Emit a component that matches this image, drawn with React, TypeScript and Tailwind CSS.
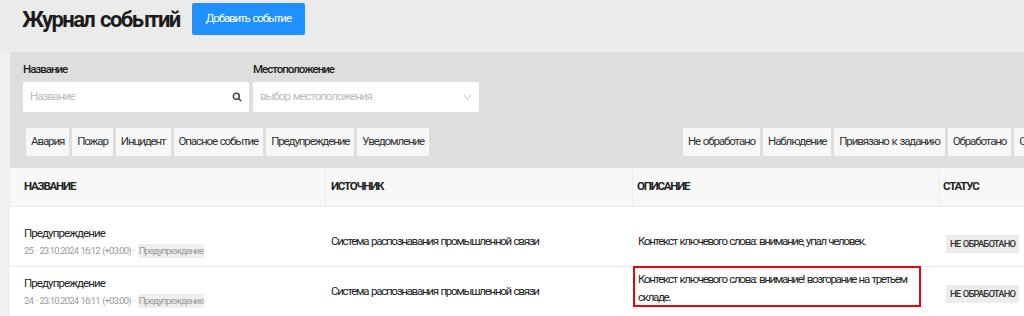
import React from "react";

const leftChips = ["Авария", "Пожар", "Инцидент", "Опасное событие", "Предупреждение", "Уведомление"];
const rightChips = ["Не обработано", "Наблюдение", "Привязано к заданию", "Обработано", "Сохранено"];

function Chip({ label }: { label: string }) {
  return (
    <div className="h-[28px] px-[5px] flex items-center bg-[#f7f7f7] text-[11.5px] text-[#333] tracking-[-1.1px] [word-spacing:1px] whitespace-nowrap shrink-0">
      {label}
    </div>
  );
}

function Row({ n, time, desc, boxed }: { n: number; time: string; desc: string; boxed?: boolean }) {
  return (
    <div className="grid grid-cols-[316px_307px_307px_1fr] h-[50px] border-b border-[#ececec] items-center">
      <div className="pl-[14px]">
        <div className="text-[11.5px] text-[#222] tracking-[-0.9px] leading-[16px]">Предупреждение</div>
        <div className="text-[9.5px] text-[#9a9a9a] tracking-[-0.9px] [word-spacing:1px] leading-[14px] mt-[3px] flex items-center whitespace-nowrap">
          <span>{n} · 23.10.2024 {time} (+03:00) ·</span>
          <span className="ml-[3px] bg-[#eeeeee] px-[1px]">Предупреждение</span>
        </div>
      </div>
      <div className="pl-[5px] text-[11.5px] text-[#222] tracking-[-1.25px] [word-spacing:1px] whitespace-nowrap">
        Система распознавания промышленной связи
      </div>
      <div className={boxed ? "self-start mt-[-1px]" : ""}>
        <div
          className={
            boxed
              ? "w-[288px] h-[41px] border-2 border-[#e4060f] px-[3px] pt-[2px] text-[11.5px] text-[#222] tracking-[-1.3px] [word-spacing:1px] leading-[18px]"
              : "pl-[5px] text-[11.5px] text-[#222] tracking-[-1.3px] [word-spacing:1px] whitespace-nowrap"
          }
        >
          {desc}
        </div>
      </div>
      <div className="pl-[6px]">
        <span className="inline-flex items-center h-[18px] px-[4px] bg-[#ececec] text-[9.5px] font-medium text-[#333] tracking-[-0.9px] [word-spacing:1px] whitespace-nowrap">
          НЕ ОБРАБОТАНО
        </span>
      </div>
    </div>
  );
}

export default function App() {
  return (
    <div
      className="w-[1024px] h-[316px] overflow-hidden bg-[#f0f0f0] flex"
      style={{ fontFamily: "Roboto, 'Noto Sans', sans-serif" }}
    >
      <div className="w-[10px] shrink-0 bg-[#f0f0f0]" />
      <div className="flex-1 flex flex-col min-w-0">
        <div className="h-[52px] shrink-0 bg-[#ebebeb] flex items-start pl-[22px] pt-[3px] ml-[-10px]">
          <h1 className="text-[22px] font-bold text-[#1c1c1c] tracking-[-1.6px] [word-spacing:2px] leading-[32px] mt-[1px] whitespace-nowrap">
            Журнал событий
          </h1>
          <button className="ml-[12px] h-[32px] px-[14px] bg-[#1e90ff] rounded-[2px] text-white text-[11.5px] tracking-[-1.1px] [word-spacing:1px] whitespace-nowrap">
            Добавить событие
          </button>
        </div>
        <div className="h-[116px] shrink-0 bg-[#dedede] pl-[13px] pt-[9px] flex flex-col">
          <div className="flex gap-[4px]">
            <div className="w-[226px]">
              <div className="text-[11.5px] font-medium text-[#222] tracking-[-1px] leading-[16px] mb-[5px]">Название</div>
              <div className="h-[30px] bg-white rounded-[2px] flex items-center px-[7px] justify-between">
                <span className="text-[11.5px] text-[#bdbdbd] tracking-[-1px]">Название</span>
                <svg width="10" height="10" viewBox="0 0 12 12" fill="none" stroke="#444" strokeWidth="1.8">
                  <circle cx="5.2" cy="5.2" r="3.6" />
                  <path d="M8 8l2.6 2.6" strokeLinecap="round" />
                </svg>
              </div>
            </div>
            <div className="w-[226px]">
              <div className="text-[11.5px] font-medium text-[#222] tracking-[-1px] leading-[16px] mb-[5px]">Местоположение</div>
              <div className="h-[30px] bg-white rounded-[2px] flex items-center px-[7px] justify-between">
                <span className="text-[11.5px] text-[#bdbdbd] tracking-[-1px] [word-spacing:1px]">выбор местоположения</span>
                <svg width="9" height="8" viewBox="0 0 10 8" fill="none" stroke="#bbb" strokeWidth="1">
                  <path d="M1 1.5l4 5 4-5" />
                </svg>
              </div>
            </div>
          </div>
          <div className="flex mt-[16px] pl-[3px]">
            <div className="flex gap-[3px] w-[657px] shrink-0">
              {leftChips.map((c) => (
                <Chip key={c} label={c} />
              ))}
            </div>
            <div className="flex gap-[3px] shrink-0">
              {rightChips.map((c) => (
                <Chip key={c} label={c} />
              ))}
            </div>
          </div>
        </div>
        <div className="flex-1 bg-white">
          <div className="grid grid-cols-[316px_307px_307px_1fr] h-[39px] bg-[#f8f8f8] border-b border-[#ebebeb] items-center text-[11.5px] font-bold text-[#222] tracking-[-1.2px]">
            <div className="pl-[14px] h-full flex items-center border-r border-[#ececec]">НАЗВАНИЕ</div>
            <div className="pl-[5px] h-full flex items-center border-r border-[#ececec]">ИСТОЧНИК</div>
            <div className="pl-[4px] h-full flex items-center border-r border-[#ececec]">ОПИСАНИЕ</div>
            <div className="pl-[3px] h-full flex items-center">СТАТУС</div>
          </div>
          <div className="h-[10px]" />
          <Row n={25} time="16:12" desc="Контекст ключевого слова: внимание, упал человек." />
          <Row n={24} time="16:11" desc="Контекст ключевого слова: внимание! возгорание на третьем складе." boxed />
        </div>
      </div>
    </div>
  );
}
